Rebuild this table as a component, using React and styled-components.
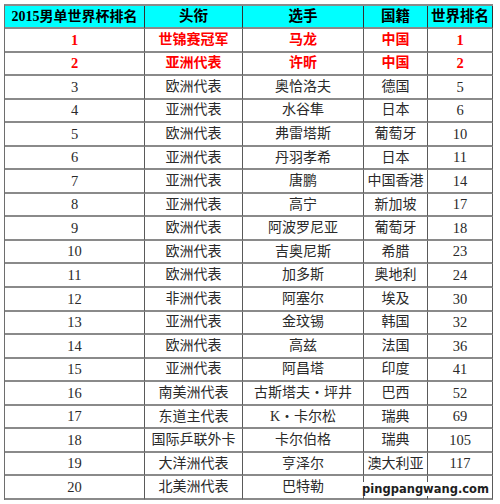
import React from 'react';
import styled, { createGlobalStyle } from 'styled-components';

const GlobalStyle = createGlobalStyle`
  html, body {
    margin: 0;
    padding: 0;
    background: #ffffff;
  }
  body {
    font-family: "Liberation Serif", "Noto Sans CJK SC", serif;
  }
`;

const Page = styled.div`
  position: relative;
  width: 500px;
  height: 504px;
  padding: 4px 0 0 4px;
  box-sizing: border-box;
  background: #fff;
`;

const Grid = styled.div`
  display: grid;
  grid-template-columns: 140px 98px 121px 64px 65px;
  grid-template-rows: 23px repeat(20, 1fr);
  width: 489px;
  height: 496px;
  box-sizing: border-box;
  border-left: 1px solid #6e6e6e;
  border-top: 2px solid #8a8a8a;
`;

const Cell = styled.div`
  display: flex;
  align-items: center;
  justify-content: center;
  box-sizing: border-box;
  border-right: 1px solid ${(p) => (p.$head ? '#333' : '#5a5a5a')};
  border-bottom: 2px solid #8a8a8a;
  background: ${(p) => (p.$head ? '#00ffff' : '#fff')};
  color: ${(p) => (p.$head ? '#000' : p.$red ? '#ff0000' : '#2a2a2a')};
  font-weight: ${(p) => (p.$head || p.$red ? 700 : 400)};
  font-size: ${(p) => p.$size || 14}px;
  line-height: 1;
  white-space: nowrap;
  overflow: hidden;
`;

const Watermark = styled.div`
  position: absolute;
  right: 9px;
  bottom: 8px;
  font-family: "DejaVu Sans", sans-serif;
  font-weight: 700;
  font-size: 11.5px;
  color: #1e1e1e;
  background: #fff;
  padding: 0 2px;
  text-shadow: 0 0 2px #fff;
`;

const headers = ['2015男单世界杯排名', '头衔', '选手', '国籍', '世界排名'];

const rows = [
  ['1', '世锦赛冠军', '马龙', '中国', '1', true],
  ['2', '亚洲代表', '许昕', '中国', '2', true],
  ['3', '欧洲代表', '奥恰洛夫', '德国', '5'],
  ['4', '亚洲代表', '水谷隼', '日本', '6'],
  ['5', '欧洲代表', '弗雷塔斯', '葡萄牙', '10'],
  ['6', '亚洲代表', '丹羽孝希', '日本', '11'],
  ['7', '亚洲代表', '唐鹏', '中国香港', '14'],
  ['8', '亚洲代表', '高宁', '新加坡', '17'],
  ['9', '欧洲代表', '阿波罗尼亚', '葡萄牙', '18'],
  ['10', '欧洲代表', '吉奥尼斯', '希腊', '23'],
  ['11', '欧洲代表', '加多斯', '奥地利', '24'],
  ['12', '非洲代表', '阿塞尔', '埃及', '30'],
  ['13', '亚洲代表', '金玟锡', '韩国', '32'],
  ['14', '欧洲代表', '高兹', '法国', '36'],
  ['15', '亚洲代表', '阿昌塔', '印度', '41'],
  ['16', '南美洲代表', '古斯塔夫・坪井', '巴西', '52'],
  ['17', '东道主代表', 'K・卡尔松', '瑞典', '69'],
  ['18', '国际乒联外卡', '卡尔伯格', '瑞典', '105'],
  ['19', '大洋洲代表', '亨泽尔', '澳大利亚', '117'],
  ['20', '北美洲代表', '巴特勒', '', ''],
];

export default function App() {
  return (
    <Page>
      <GlobalStyle />
      <Grid>
        {headers.map((h, i) => (
          <Cell key={h} $head $size={i === 0 ? 14 : 14.5}>
            {h}
          </Cell>
        ))}
        {rows.map((r) =>
          r.slice(0, 5).map((v, i) => (
            <Cell key={`${r[0]}-${i}`} $red={r[5]} $size={i === 0 || i === 4 ? 14.5 : 14}>
              {v}
            </Cell>
          ))
        )}
      </Grid>
      <Watermark>pingpangwang.com</Watermark>
    </Page>
  );
}
